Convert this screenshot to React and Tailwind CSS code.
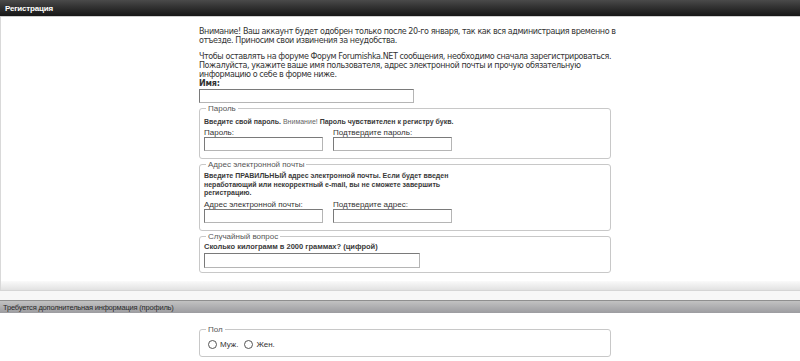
import React from 'react';

const verdana = { fontFamily: '"DejaVu Sans", Verdana, sans-serif' };
const tahoma = { fontFamily: '"Liberation Sans", Arial, sans-serif' };

const Field = ({ className = 'w-[119px]' }) => (
    <input
        type="text"
        className={`block h-[14px] border border-[#7a7a7a] border-r-[#b5b5b5] border-b-[#b5b5b5] bg-white ${className}`}
    />
);

const Box = ({ legend, children, pb = 'pb-[7px]' }) => (
    <fieldset className={`border border-[#c8c8c8] rounded-[3px] px-[4px] pt-0 m-0 ${pb}`} style={tahoma}>
        <legend className="px-[2px] ml-[2px] text-[8px] leading-[9px] text-[#555]">{legend}</legend>
        {children}
    </fieldset>
);

const App = () => {
    return (
        <div className="w-[800px] h-[361px] bg-white overflow-hidden text-[8px] leading-[9px] text-[#333]" style={verdana}>
            {/* top bar */}
            <div className="h-[17px] bg-gradient-to-b from-[#4a4a4a] to-[#161616] border-b border-[#cfcfcf] flex items-center px-[5px]" style={tahoma}>
                <span className="text-white font-bold text-[8px] tracking-[-0.2px]">Регистрация</span>
            </div>

            <div className="border-l border-[#d9d9d9] h-[264px]">
                <div className="ml-[198px] w-[420px] pt-[10px]">
                    <p className="tracking-tighter">
                        Внимание! Ваш аккаунт будет одобрен только после 20-го января, так как вся администрация временно в отъезде. Приносим свои извинения за неудобства.
                    </p>
                    <p className="mt-[7px] tracking-tighter">
                        Чтобы оставлять на форуме Форум Forumishka.NET сообщения, необходимо сначала зарегистрироваться. Пожалуйста, укажите ваше имя пользователя, адрес электронной почты и прочую обязательную информацию о себе в форме ниже.
                    </p>
                    <div className="font-bold tracking-tight">Имя:</div>
                    <Field className="w-[215px] mt-[1px]" />

                    <div className="mt-[1px] w-[412px]">
                        <Box legend="Пароль">
                            <div className="font-bold text-[7px] text-[#3a3a3a] mt-[4px]">
                                Введите свой пароль. <span className="font-normal text-[#666]">Внимание!</span> Пароль чувствителен к регистру букв.
                            </div>
                            <div className="flex gap-[10px] mt-[2px]">
                                <div>
                                    <div>Пароль:</div>
                                    <Field className="w-[119px]" />
                                </div>
                                <div>
                                    <div>Подтвердите пароль:</div>
                                    <Field className="w-[119px]" />
                                </div>
                            </div>
                        </Box>
                    </div>

                    <div className="mt-[1px] w-[412px]">
                        <Box legend="Адрес электронной почты">
                            <div className="font-bold text-[7px] leading-[8.5px] text-[#3a3a3a] w-[245px] mt-[3px]">
                                Введите ПРАВИЛЬНЫЙ адрес электронной почты. Если будет введен неработающий или некорректный e-mail, вы не сможете завершить регистрацию.
                            </div>
                            <div className="flex gap-[10px] mt-[2px]">
                                <div>
                                    <div>Адрес электронной почты:</div>
                                    <Field className="w-[119px]" />
                                </div>
                                <div>
                                    <div>Подтвердите адрес:</div>
                                    <Field className="w-[119px]" />
                                </div>
                            </div>
                        </Box>
                    </div>

                    <div className="mt-[1px] w-[412px]">
                        <Box legend="Случайный вопрос" pb="pb-[4px]">
                            <div className="font-bold text-[7.5px] text-[#3a3a3a] mt-[1px]">Сколько килограмм в 2000 граммах? (цифрой)</div>
                            <Field className="w-[216px] h-[15px] mt-[2px]" />
                        </Box>
                    </div>
                </div>
            </div>

            {/* bottom of first panel */}
            <div className="h-[9px] bg-gradient-to-b from-[#fafafa] to-[#e2e2e2] border-l border-[#d9d9d9]" />
            <div className="h-[10px] bg-[#f7f7f7] border-t border-[#d5d5d5]" />

            {/* second panel header */}
            <div className="h-[13px] bg-gradient-to-b from-[#c2c2c2] to-[#9c9ca0] border-t border-[#8f8f8f] flex items-center px-[3px]" style={tahoma}>
                <span className="text-[#2a2a2a] text-[7.5px] tracking-[-0.2px]">Требуется дополнительная информация (профиль)</span>
            </div>

            <div className="ml-[199px] w-[412px] pt-[12px]">
                <Box legend="Пол" pb="pb-[6px]">
                    <div className="flex items-center gap-[3px] mt-[6px] ml-[4px] pb-[1px]">
                        <span className="w-[9px] h-[9px] rounded-full border border-[#555] bg-white" />
                        <span>Муж.</span>
                        <span className="w-[9px] h-[9px] rounded-full border border-[#555] bg-white ml-[3px]" />
                        <span>Жен.</span>
                    </div>
                </Box>
            </div>
        </div>
    );
};

export default App;
